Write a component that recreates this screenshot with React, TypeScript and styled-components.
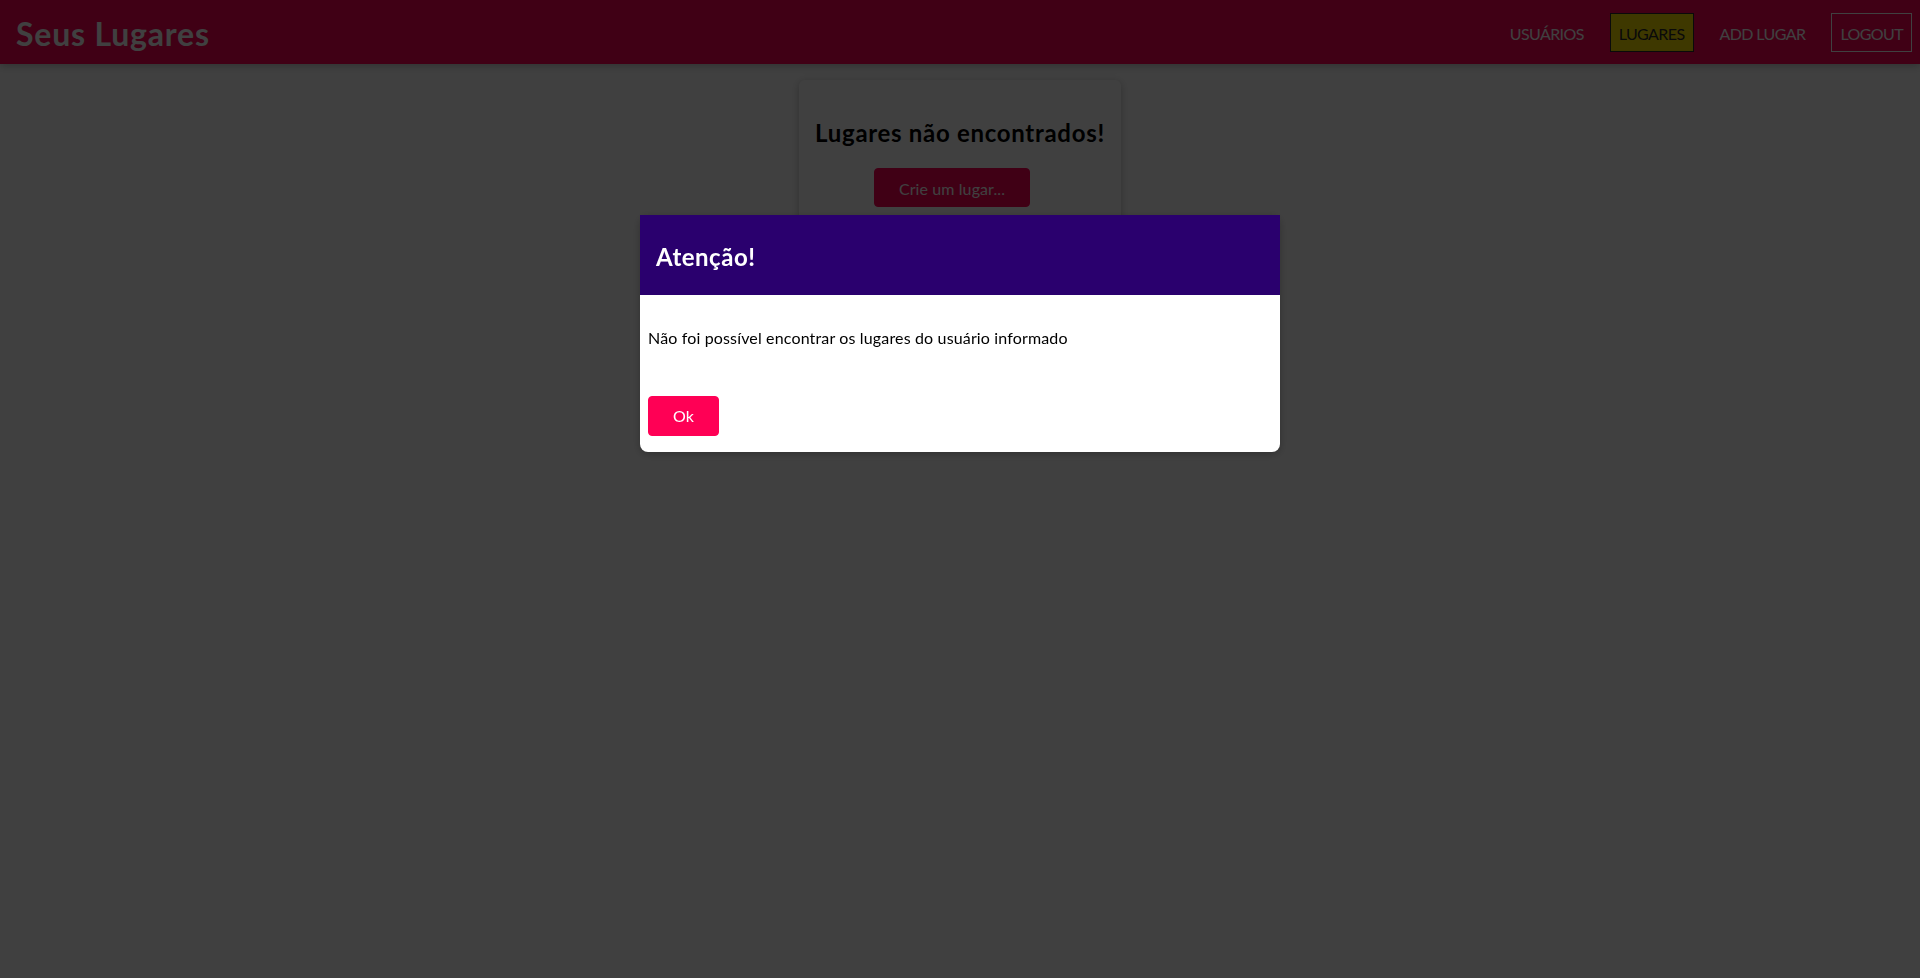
import React from "react";
import styled, { createGlobalStyle } from "styled-components";

const GlobalStyle = createGlobalStyle`
  * { box-sizing: border-box; }
  html { font-family: Lato, "Open Sans", "Noto Sans", sans-serif; }
  body { margin: 0; background: #ffffff; line-height: 1.33; color: #000; }
`;

const MainHeader = styled.header`
  width: 100%;
  height: 4rem;
  display: flex;
  align-items: center;
  justify-content: space-between;
  background: #ff0055;
  box-shadow: 0 2px 8px rgba(0, 0, 0, 0.26);
  padding: 0 8px 0 1rem;
`;

const Title = styled.h1`
  margin: 0;
  padding-top: 5px;
  font-size: 2rem;
  font-weight: 700;
  letter-spacing: 0.8px;
  color: #ffffff;
  a { color: #ffffff; text-decoration: none; }
`;

const NavList = styled.ul`
  list-style: none;
  margin: 0;
  padding: 1px 0 0;
  display: flex;
  align-items: center;
  gap: 17px;
`;

const NavItem = styled.li`
  margin: 0;
`;

const NavLink = styled.a<{ $active?: boolean }>`
  display: inline-block;
  font-size: 16px;
  letter-spacing: -0.6px;
  padding: 9px 0.5rem 7px;
  text-decoration: none;
  border: 1px solid ${(p) => (p.$active ? "#292929" : "transparent")};
  color: ${(p) => (p.$active ? "#292929" : "#ffffff")};
  background: ${(p) => (p.$active ? "#f8df00" : "transparent")};
`;

const LogoutButton = styled.button`
  font: inherit;
  font-size: 16px;
  line-height: 1.33;
  letter-spacing: -0.6px;
  cursor: pointer;
  border: 1px solid #ffffff;
  color: #ffffff;
  background: transparent;
  padding: 9px 0.5rem 7px;
`;

const Main = styled.main`
  padding-top: 1rem;
`;

const PlaceList = styled.div`
  display: flex;
  justify-content: center;
`;

const Card = styled.div`
  position: relative;
  box-shadow: 0 2px 8px rgba(0, 0, 0, 0.26);
  border-radius: 6px;
  padding: 1rem;
  overflow: hidden;
  background: #ffffff;
  text-align: center;
`;

const CardTitle = styled.h2`
  font-size: 1.5rem;
  font-weight: 700;
  letter-spacing: 0.7px;
  margin: 0.83em 0;
  padding-top: 1px;
  margin-bottom: calc(0.83em - 1px);
`;

const Button = styled.a`
  font: inherit;
  font-size: 16px;
  letter-spacing: 0.1px;
  padding: 9px 1.5rem 7px;
  border: 1px solid #ff0055;
  border-radius: 4px;
  background: #ff0055;
  color: #ffffff;
  cursor: pointer;
  margin-right: 1rem;
  text-decoration: none;
  display: inline-block;
`;

const Backdrop = styled.div`
  position: fixed;
  top: 0;
  left: 0;
  width: 100%;
  height: 100vh;
  background: rgba(0, 0, 0, 0.75);
  z-index: 10;
`;

const Modal = styled.div`
  z-index: 100;
  position: fixed;
  top: 22vh;
  left: calc(50% - 20rem);
  width: 40rem;
  background: #ffffff;
  box-shadow: 0 2px 8px rgba(0, 0, 0, 0.26);
  border-radius: 8px;
`;

const ModalHeader = styled.header`
  width: 100%;
  padding: 1rem 0.5rem;
  background: #2a006e;
  color: #ffffff;
`;

const ModalTitle = styled.h2`
  margin: 0.5rem;
  margin-top: calc(0.5rem + 2px);
  margin-bottom: calc(0.5rem - 2px);
  font-size: 1.5rem;
  font-weight: 700;
  letter-spacing: 0.5px;
`;

const ModalContent = styled.div`
  padding: 1rem 0.5rem;
  font-size: 16px;
  letter-spacing: 0.15px;
  p { margin: 1rem 0; }
`;

const ModalFooter = styled.footer`
  padding: 1rem 0.5rem;
`;

const OkButton = styled.button`
  font: inherit;
  font-size: 16px;
  line-height: 1.33;
  padding: 0.5rem 1.5rem;
  border: 1px solid #ff0055;
  border-radius: 4px;
  background: #ff0055;
  color: #ffffff;
  cursor: pointer;
  margin-right: 1rem;
`;

export default function App() {
  return (
    <>
      <GlobalStyle />
      <MainHeader>
        <Title>
          <a href="#">Seus Lugares</a>
        </Title>
        <nav>
          <NavList>
            <NavItem>
              <NavLink href="#">USUÁRIOS</NavLink>
            </NavItem>
            <NavItem>
              <NavLink href="#" $active>
                LUGARES
              </NavLink>
            </NavItem>
            <NavItem>
              <NavLink href="#">ADD LUGAR</NavLink>
            </NavItem>
            <NavItem>
              <LogoutButton>LOGOUT</LogoutButton>
            </NavItem>
          </NavList>
        </nav>
      </MainHeader>
      <Main>
        <PlaceList>
          <Card>
            <CardTitle>Lugares não encontrados!</CardTitle>
            <Button href="#">Crie um lugar...</Button>
          </Card>
        </PlaceList>
      </Main>
      <Backdrop />
      <Modal>
        <ModalHeader>
          <ModalTitle>Atenção!</ModalTitle>
        </ModalHeader>
        <ModalContent>
          <p>Não foi possível encontrar os lugares do usuário informado</p>
        </ModalContent>
        <ModalFooter>
          <OkButton>Ok</OkButton>
        </ModalFooter>
      </Modal>
    </>
  );
}
